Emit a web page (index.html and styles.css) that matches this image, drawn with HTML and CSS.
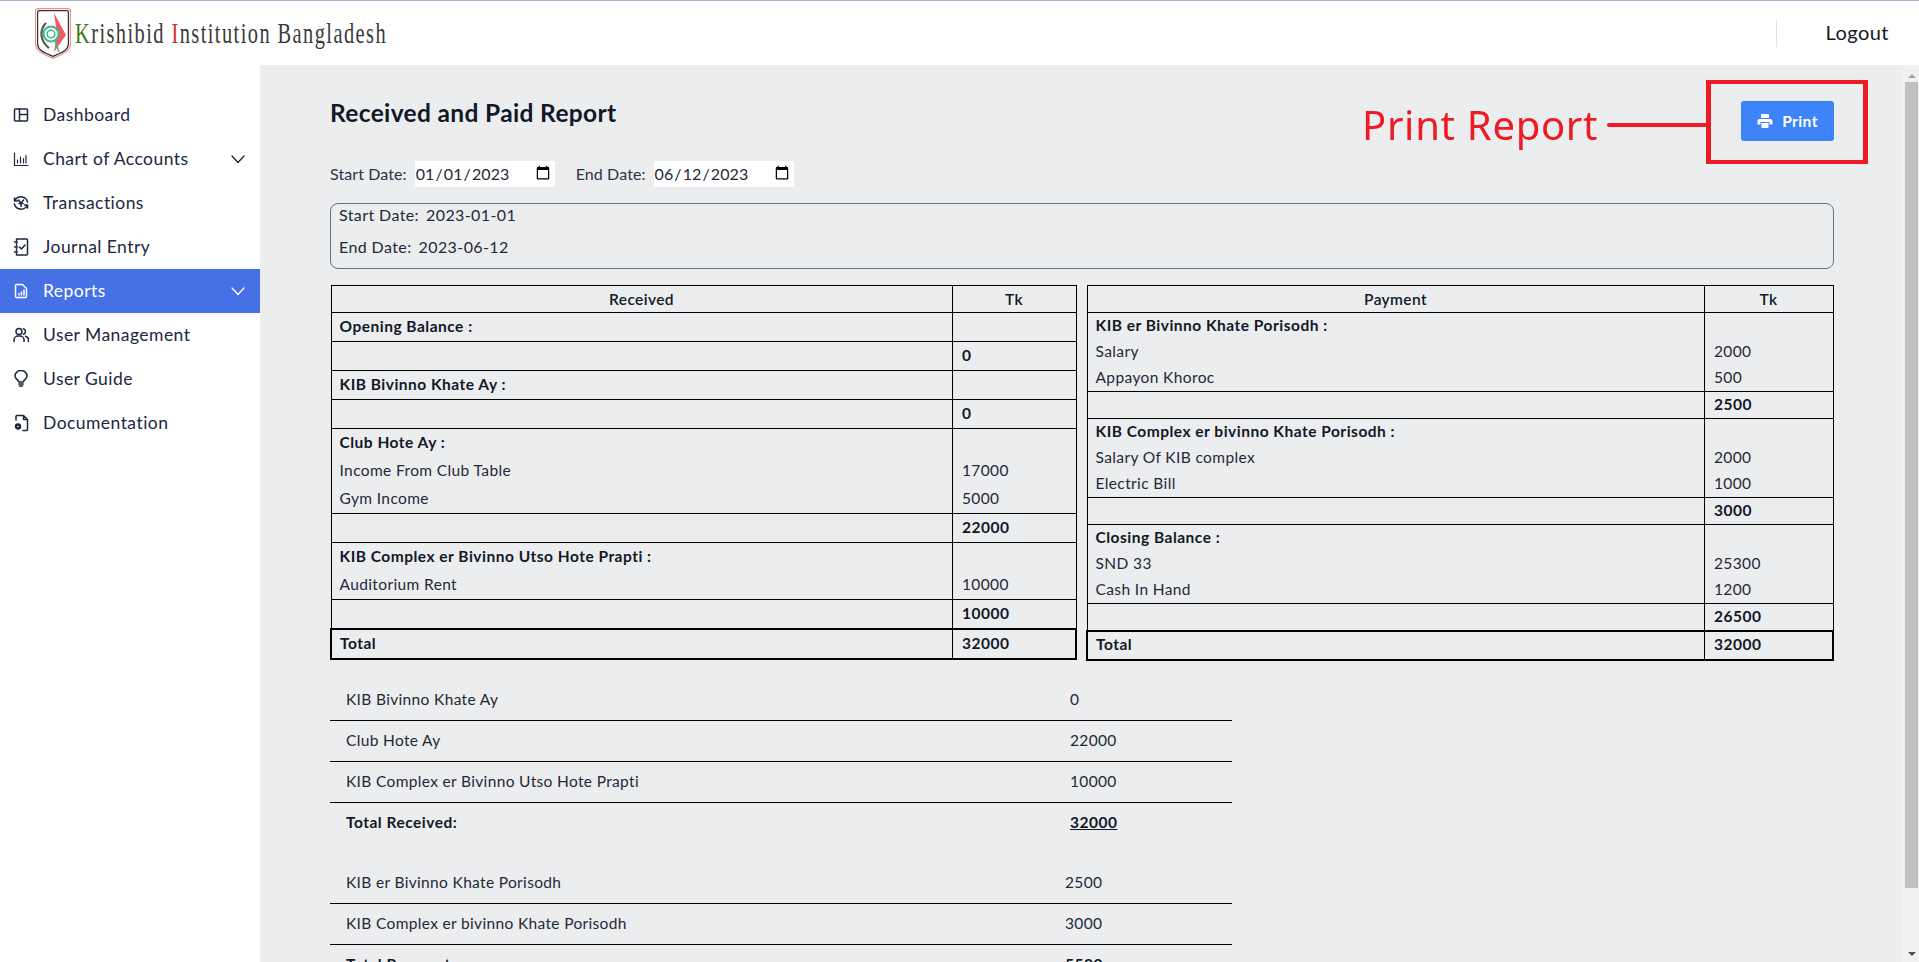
FILE: index.html
```html
<!DOCTYPE html>
<html lang="en">
<head>
<meta charset="utf-8">
<title>Received and Paid Report</title>
<link rel="stylesheet" href="styles.css">
</head>
<body>
<header class="topbar">
  <div class="brand">
    <svg class="logo" viewBox="0 0 36 51" aria-hidden="true">
      <path d="M3 .6H33A2.400 2.400 0 0 1 35.400 3V36C35.400 44 27 46 18 50.400C9 46 .6 44 .6 36V3A2.400 2.400 0 0 1 3 .6Z" fill="#fff" stroke="#ef8f8f" stroke-width="1.200"/>
      <path d="M4 2.600H32A1.400 1.400 0 0 1 33.400 4V35.500C33.400 43 26 44.500 18 48.400C10 44.500 2.600 43 2.600 35.500V4A1.400 1.400 0 0 1 4 2.600Z" fill="#fff" stroke="#333" stroke-width="1.200"/>
      <path d="M19 5L31 27L19 44L22 27Z" fill="#ef5b62"/>
      <circle cx="16" cy="26" r="7.500" fill="#fff" stroke="#3dba8c" stroke-width="2"/>
      <circle cx="16" cy="26" r="3.800" fill="none" stroke="#3dba8c" stroke-width="1.500"/>
      <path d="M20 33L24 44" fill="none" stroke="#3dba8c" stroke-width="1.500"/>
      <path d="M11 15C4 22 5 33 14 40" fill="none" stroke="#555" stroke-width="2.200"/>
    </svg>
    <span class="brand-name"><span class="brand-k">K</span>rishibid <span class="brand-i">I</span>nstitution Bangladesh</span>
  </div>
  <div class="logout">Logout</div>
</header>

<div class="shell">
  <nav class="sidebar">
    <a class="nav-item"><svg class="ico" viewBox="0 0 16 16"><path d="M2.500 2h11a1 1 0 0 1 1 1v10a1 1 0 0 1-1 1h-11a1 1 0 0 1-1-1V3a1 1 0 0 1 1-1ZM6.500 2v12M6.500 7.500h8"/></svg><span>Dashboard</span></a>
    <a class="nav-item"><svg class="ico ico-thin" viewBox="0 0 16 16"><path d="M1.500 2v12.500H15M4.500 9v3M7.500 6v6M10.500 7.500V12M13 4.500V12"/></svg><span>Chart of Accounts</span><svg class="chev" viewBox="0 0 16 16"><path d="M2 5l6 6.500L14 5"/></svg></a>
    <a class="nav-item"><svg class="ico" viewBox="0 0 16 16"><path d="M2 5.500A6.800 6.800 0 0 1 14.600 7M14 10.500A6.800 6.800 0 0 1 1.400 9M1.500 3v3h3M14.500 13v-3h-3M5.500 5l2.500 3 2.500-3M8 8v3.500M6 8.500h4"/></svg><span>Transactions</span></a>
    <a class="nav-item"><svg class="ico ico-tall" viewBox="0 0 16 18"><path d="M3.500 1h10a1 1 0 0 1 1 1v14a1 1 0 0 1-1 1h-10M3.500 1v1.500M3.500 5.500v2M3.500 10.500v2M3.500 15.500v1.500M1.500 4h3M1.500 9h3M1.500 14h3M6.500 9l2 2 3.500-4"/></svg><span>Journal Entry</span></a>
    <a class="nav-item active"><svg class="ico" viewBox="0 0 16 16"><path d="M3.500 1.500h6l4 4v8a1 1 0 0 1-1 1h-9a1 1 0 0 1-1-1v-11a1 1 0 0 1 1-1ZM6 12v-1.500M8.500 12V9M11 12V7"/></svg><span>Reports</span><svg class="chev" viewBox="0 0 16 16"><path d="M2 5l6 6.500L14 5"/></svg></a>
    <a class="nav-item"><svg class="ico" viewBox="0 0 16 16"><circle cx="6" cy="4.500" r="3"/><path d="M1 14.500v-1.500a4 4 0 0 1 4-4h2a4 4 0 0 1 4 4v1.500M10.500 1.700a3 3 0 0 1 0 5.600M12.500 9.200a4 4 0 0 1 3 3.800v1.500"/></svg><span>User Management</span></a>
    <a class="nav-item"><svg class="ico ico-tall" viewBox="0 0 16 18"><path d="M5.800 12C5.500 10 2 8.800 2 6a6 5.500 0 0 1 12 0c0 2.800-3.500 4-3.800 6ZM5.800 14h4.400M6.500 16h3"/></svg><span>User Guide</span></a>
    <a class="nav-item"><svg class="ico ico-tall" viewBox="0 0 16 18"><path d="M3 6V2.500a1 1 0 0 1 1-1H10.500L14.500 5.500v10a1 1 0 0 1-1 1H10M10.500 1.500V5.500h4"/><circle cx="5" cy="12.500" r="2" stroke-width="2.400"/></svg><span>Documentation</span></a>
  </nav>

  <main class="content">
    <div class="title-row">
      <h1 class="title">Received and Paid Report</h1>
      <button class="print-btn"><svg class="print-ico" viewBox="0 0 16 16"><path d="M5 1h6a1 1 0 0 1 1 1v3H4V2a1 1 0 0 1 1-1ZM2.500 6h11A2 2 0 0 1 15.500 8v3.500h-3V9h-9v2.500h-3V8A2 2 0 0 1 2.500 6ZM4.500 10h7v4a1 1 0 0 1-1 1h-5a1 1 0 0 1-1-1Z"/></svg>Print</button>
    </div>

    <div class="filters">
      <label class="filter"><span class="filter-label">Start Date:</span><input class="date-input" type="date" value="2023-01-01"></label>
      <label class="filter"><span class="filter-label">End Date:</span><input class="date-input" type="date" value="2023-06-12"></label>
    </div>

    <div class="range-box">
      <p class="range-start"><span>Start Date:</span><span>2023-01-01</span></p>
      <p class="range-end"><span>End Date:</span><span>2023-06-12</span></p>
    </div>

    <div class="ledgers">
      <table class="ledger ledger-left">
        <thead><tr><th>Received</th><th>Tk</th></tr></thead>
        <tbody>
          <tr class="r29"><td><b>Opening Balance :</b></td><td></td></tr>
          <tr class="r29"><td></td><td><b>0</b></td></tr>
          <tr class="r29"><td><b>KIB Bivinno Khate Ay :</b></td><td></td></tr>
          <tr class="r29"><td></td><td><b>0</b></td></tr>
          <tr><td class="lines"><div class="ln"><b>Club Hote Ay :</b></div><div class="ln">Income From Club Table</div><div class="ln">Gym Income</div></td><td class="bottom"><div class="ln">17000</div><div class="ln">5000</div></td></tr>
          <tr class="r29"><td></td><td><b>22000</b></td></tr>
          <tr><td class="lines"><div class="ln"><b>KIB Complex er Bivinno Utso Hote Prapti :</b></div><div class="ln">Auditorium Rent</div></td><td class="bottom"><div class="ln">10000</div></td></tr>
          <tr class="r29"><td></td><td><b>10000</b></td></tr>
        </tbody>
        <tfoot><tr><td><b>Total</b></td><td><b>32000</b></td></tr></tfoot>
      </table>

      <table class="ledger ledger-right">
        <thead><tr><th>Payment</th><th>Tk</th></tr></thead>
        <tbody>
          <tr><td class="lines"><div class="ln"><b>KIB er Bivinno Khate Porisodh :</b></div><div class="ln">Salary</div><div class="ln">Appayon Khoroc</div></td><td class="bottom"><div class="ln">2000</div><div class="ln">500</div></td></tr>
          <tr class="r27"><td></td><td><b>2500</b></td></tr>
          <tr><td class="lines"><div class="ln"><b>KIB Complex er bivinno Khate Porisodh :</b></div><div class="ln">Salary Of KIB complex</div><div class="ln">Electric Bill</div></td><td class="bottom"><div class="ln">2000</div><div class="ln">1000</div></td></tr>
          <tr class="r27"><td></td><td><b>3000</b></td></tr>
          <tr><td class="lines"><div class="ln"><b>Closing Balance :</b></div><div class="ln">SND 33</div><div class="ln">Cash In Hand</div></td><td class="bottom"><div class="ln">25300</div><div class="ln">1200</div></td></tr>
          <tr class="r27"><td></td><td><b>26500</b></td></tr>
        </tbody>
        <tfoot><tr><td><b>Total</b></td><td><b>32000</b></td></tr></tfoot>
      </table>
    </div>

    <table class="summary sum-received">
      <tr><td>KIB Bivinno Khate Ay</td><td>0</td></tr>
      <tr><td>Club Hote Ay</td><td>22000</td></tr>
      <tr><td>KIB Complex er Bivinno Utso Hote Prapti</td><td>10000</td></tr>
      <tr class="sum-total"><td><b>Total Received:</b></td><td><b class="ul">32000</b></td></tr>
    </table>

    <table class="summary sum-paid">
      <tr><td>KIB er Bivinno Khate Porisodh</td><td>2500</td></tr>
      <tr><td>KIB Complex er bivinno Khate Porisodh</td><td>3000</td></tr>
      <tr class="sum-total"><td><b>Total Payment:</b></td><td><b class="ul">5500</b></td></tr>
    </table>
  </main>

  <div class="scrollbar" aria-hidden="true">
    <span class="arrow-up"></span>
    <span class="thumb"></span>
    <span class="arrow-down"></span>
  </div>
</div>

<div class="callout">
  <span class="callout-text">Print Report</span>
  <span class="callout-line"></span>
  <span class="callout-box"></span>
</div>
</body>
</html>
```
FILE: styles.css
```css
* { box-sizing: border-box; }
html, body { height: 100%; }
body {
  margin: 0;
  overflow: hidden;
  background: #fff;
  color: #1f2937;
  font-family: Lato, "Open Sans", sans-serif;
  font-size: 15px;
  display: flex;
  flex-direction: column;
}
.topbar {
  height: 65px;
  flex: none;
  border-top: 1px solid #a3b3cf;
  background: #fff;
  display: flex;
  align-items: center;
  justify-content: space-between;
}
.brand { display: flex; align-items: center; margin-left: 35px; }
.logo { width: 36px; height: 51px; }
.brand-name {
  font-family: "Liberation Serif", serif;
  font-size: 30px;
  letter-spacing: 2.1px;
  color: #3a3a3a;
  margin-left: 4px;
  white-space: nowrap;
  display: inline-block;
  transform: scaleX(.68);
  transform-origin: left center;
}
.brand-k { color: #3f7a10; }
.brand-i { color: #d32f2f; }
.logout {
  height: 28px;
  margin-right: 30px;
  border-left: 1px solid #dfe1e5;
  padding-left: 49px;
  font-size: 20px;
  letter-spacing: .45px;
  line-height: 27px;
  color: #111827;
}
.shell { flex: 1; min-height: 0; display: flex; }
.sidebar { width: 260px; flex: none; padding-top: 28px; background: #fff; }
.nav-item {
  height: 44px;
  display: flex;
  align-items: center;
  padding: 0 14px 0 13px;
  font-size: 17.500px;
  letter-spacing: .45px;
  color: #1a2742;
}
.nav-item span { margin-left: 14px; padding-bottom: 2px; }
.nav-item.active { background: #4670e6; color: #fff; }
.ico {
  width: 16px;
  height: 16px;
  flex: none;
  fill: none;
  stroke: currentColor;
  stroke-width: 1.500;
  stroke-linecap: round;
  stroke-linejoin: round;
}
.ico-thin { stroke-width: 1.200; }
.ico-tall { height: 18px; }
.chev {
  width: 16px;
  height: 16px;
  margin-left: auto;
  fill: none;
  stroke: currentColor;
  stroke-width: 1.300;
  stroke-linecap: round;
  stroke-linejoin: round;
}
.content {
  flex: 1;
  min-width: 0;
  overflow: hidden;
  background: #ecedef;
  padding: 36px 69px 61px 70px;
}
.scrollbar {
  width: 16px;
  flex: none;
  background: #f1f1f1;
  display: flex;
  flex-direction: column;
  align-items: center;
  padding: 9px 1px 6px 2px;
}
.arrow-up {
  border-left: 4px solid transparent;
  border-right: 4px solid transparent;
  border-bottom: 4px solid #a3a3a3;
}
.thumb { width: 13px; height: 806px; margin-top: 4px; background: #c1c1c1; }
.arrow-down {
  margin-top: auto;
  border-left: 4px solid transparent;
  border-right: 4px solid transparent;
  border-top: 4px solid #505050;
}
.title-row {
  height: 40px;
  display: flex;
  align-items: flex-start;
  justify-content: space-between;
}
.title {
  margin: 0;
  font-size: 24.500px;
  letter-spacing: .35px;
  line-height: 24px;
  font-weight: 700;
  color: #111827;
}
.print-btn {
  width: 93px;
  height: 40px;
  border: 0;
  border-radius: 3px;
  background: #3f83f8;
  color: #fff;
  font: 700 15.500px Lato, sans-serif;
  letter-spacing: .4px;
  display: flex;
  align-items: center;
  justify-content: center;
  gap: 9px;
  padding-bottom: 1px;
}
.print-ico { width: 16px; height: 16px; fill: #fff; }
.filters { margin-top: 20px; display: flex; gap: 21px; height: 26px; }
.filter { display: flex; align-items: center; font-size: 16px; letter-spacing: .1px; color: #2b3444; }
.filter-label { padding-bottom: 2px; }
.date-input {
  width: 140px;
  height: 26px;
  margin-left: 8px;
  border: 0;
  padding: 0 2px 2px 0;
  background: #fff;
  color: #1f2937;
  font: 16px Lato, sans-serif;
  letter-spacing: .1px;
}
.range-box {
  margin-top: 16px;
  height: 66px;
  border: 1px solid #6b7280;
  border-radius: 8px;
  padding-left: 8px;
}
.range-box p { margin: 0; display: flex; gap: 7px; font-size: 16px; letter-spacing: .4px; height: 22px; line-height: 22px; }
.range-box .range-end { margin-top: 10px; }
.ledgers { margin-top: 16px; display: flex; gap: 9px; align-items: flex-start; }
.ledger {
  border-collapse: collapse;
  table-layout: fixed;
  font-size: 15.500px;
  letter-spacing: .38px;
  color: #1f2937;
}
.ledger-left { width: 747px; }
.ledger-right { width: 748px; }
.ledger th, .ledger td {
  border: 1px solid #000;
  padding: 0 8px 2px;
  vertical-align: middle;
  text-align: left;
}
.ledger th:last-child, .ledger td:last-child { padding-left: 9.500px; }
.ledger-left th:last-child, .ledger-left td:last-child { width: 124px; }
.ledger-right th:last-child, .ledger-right td:last-child { width: 129px; }
.ledger th, .ledger th:last-child { height: 27px; font-weight: 600; text-align: center; color: #111827; padding: 0; }
.ledger b { color: #111827; letter-spacing: .5px; }
.ledger .r29 td { height: 29px; }
.ledger .r27 td { height: 27px; }
.ledger-left tfoot td { height: 30px; }
.ledger-right tfoot td { height: 29px; }
.ledger tfoot td { border-width: 2px 1px; border-color: #000; }
.ledger tfoot td:first-child { border-left-width: 2px; }
.ledger tfoot td:last-child { border-right-width: 2px; }
.ledger td.lines, .ledger td.bottom { padding-bottom: 0; }
.ledger td.bottom { vertical-align: bottom; }
.ln { height: 28px; line-height: 26px; }
.ledger-right .ln { height: 26px; line-height: 24px; }
.summary {
  width: 902px;
  border-collapse: collapse;
  table-layout: fixed;
  font-size: 15.500px;
  letter-spacing: .34px;
  color: #1f2937;
}
.summary td { height: 41px; padding: 0 16px 2px; border-bottom: 1px solid #000; }
.summary tr td:last-child { width: 162px; padding-left: 0; padding-right: 0; }
.summary .sum-total td { border-bottom: 0; }
.sum-received { margin-top: 19px; }
.sum-paid { margin-top: 19px; }
.sum-paid tr td:last-child { width: 167px; }
.summary b { color: #111827; letter-spacing: .5px; }
.ul { text-decoration: underline; }
.callout {
  position: fixed;
  left: 1362px;
  top: 80px;
  width: 506px;
  height: 84px;
  pointer-events: none;
}
.callout-text {
  position: absolute;
  left: 0;
  top: 20px;
  font-family: "Noto Sans", sans-serif;
  font-size: 40px;
  letter-spacing: .7px;
  line-height: 50px;
  color: #ed1c24;
  white-space: nowrap;
}
.callout-line {
  position: absolute;
  left: 245px;
  top: 43px;
  width: 104px;
  height: 4px;
  border-radius: 2px;
  background: #ed1c24;
}
.callout-box {
  position: absolute;
  right: 0;
  top: 0;
  width: 162px;
  height: 84px;
  border: 4px solid #ed1c24;
  border-left-width: 5px;
  border-right-width: 5px;
}
```
